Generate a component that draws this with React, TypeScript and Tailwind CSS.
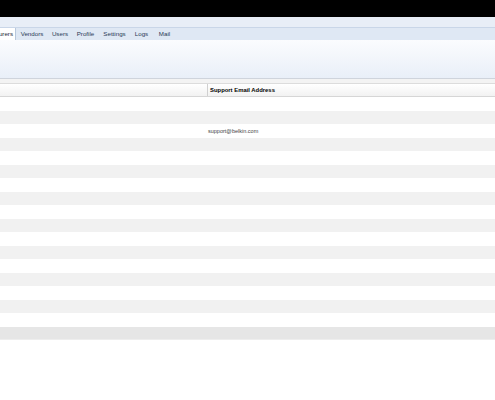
import React from "react";

const tabs: { t: string; w: string }[] = [
  { t: "Vendors", w: "w-[32px]" },
  { t: "Users", w: "w-[24px]" },
  { t: "Profile", w: "w-[27px]" },
  { t: "Settings", w: "w-[31px]" },
  { t: "Logs", w: "w-[23px]" },
  { t: "Mail", w: "w-[23px]" },
];

export default function App() {
  const rows = Array.from({ length: 17 }, (_, i) => i);
  return (
    <div className="w-[495px] h-[400px] bg-white overflow-hidden" style={{ fontFamily: '"Liberation Sans", "DejaVu Sans", sans-serif' }}>
      <div className="h-[17px] bg-black" />
      <div className="h-[11px] bg-[#e8eef7] border-b border-[#c9d6e8]" />
      <div className="h-[12px] bg-[#dfe8f4] flex items-stretch overflow-hidden">
        <div className="w-[16px] shrink-0 overflow-hidden flex justify-end bg-white border-r border-[#b8c8dc]">
          <div className="shrink-0 whitespace-nowrap pr-[2px] flex items-center text-[6.2px] text-[#1e2a3a]">Manufacturers</div>
        </div>
        {tabs.map(({ t, w }) => (
          <div key={t} className={w + " shrink-0 flex items-center justify-center whitespace-nowrap text-[6.2px] text-[#2a3a55]"}>
            {t}
          </div>
        ))}
      </div>
      <div className="h-[39px] bg-gradient-to-b from-[#fbfcfe] to-[#e9eff8] border-b border-[#cfd4dc]" />
      <div className="h-[5px] bg-[#f3f3f3] border-b border-[#dcdcdc]" />
      <div className="h-[13px] bg-gradient-to-b from-white to-[#f2f2f2] border-b border-[#d6d6d6] flex">
        <div className="w-[208px] border-r border-[#d0d0d0]" />
        <div className="pl-[2px] flex items-center whitespace-nowrap text-[5.9px] font-bold text-black">Support Email Address</div>
      </div>
      {rows.map((i) => (
        <div key={i} className={"h-[13.5px] flex " + (i % 2 === 1 ? "bg-[#f1f1f1]" : "bg-white")}>
          <div className="w-[208px]" />
          <div className="flex items-center whitespace-nowrap text-[5.5px] text-[#444]">
            {i === 2 ? "support@belkin.com" : ""}
          </div>
        </div>
      ))}
      <div className="h-[13px] bg-[#e6e6e6] border-b border-[#eeeeee]" />
    </div>
  );
}
